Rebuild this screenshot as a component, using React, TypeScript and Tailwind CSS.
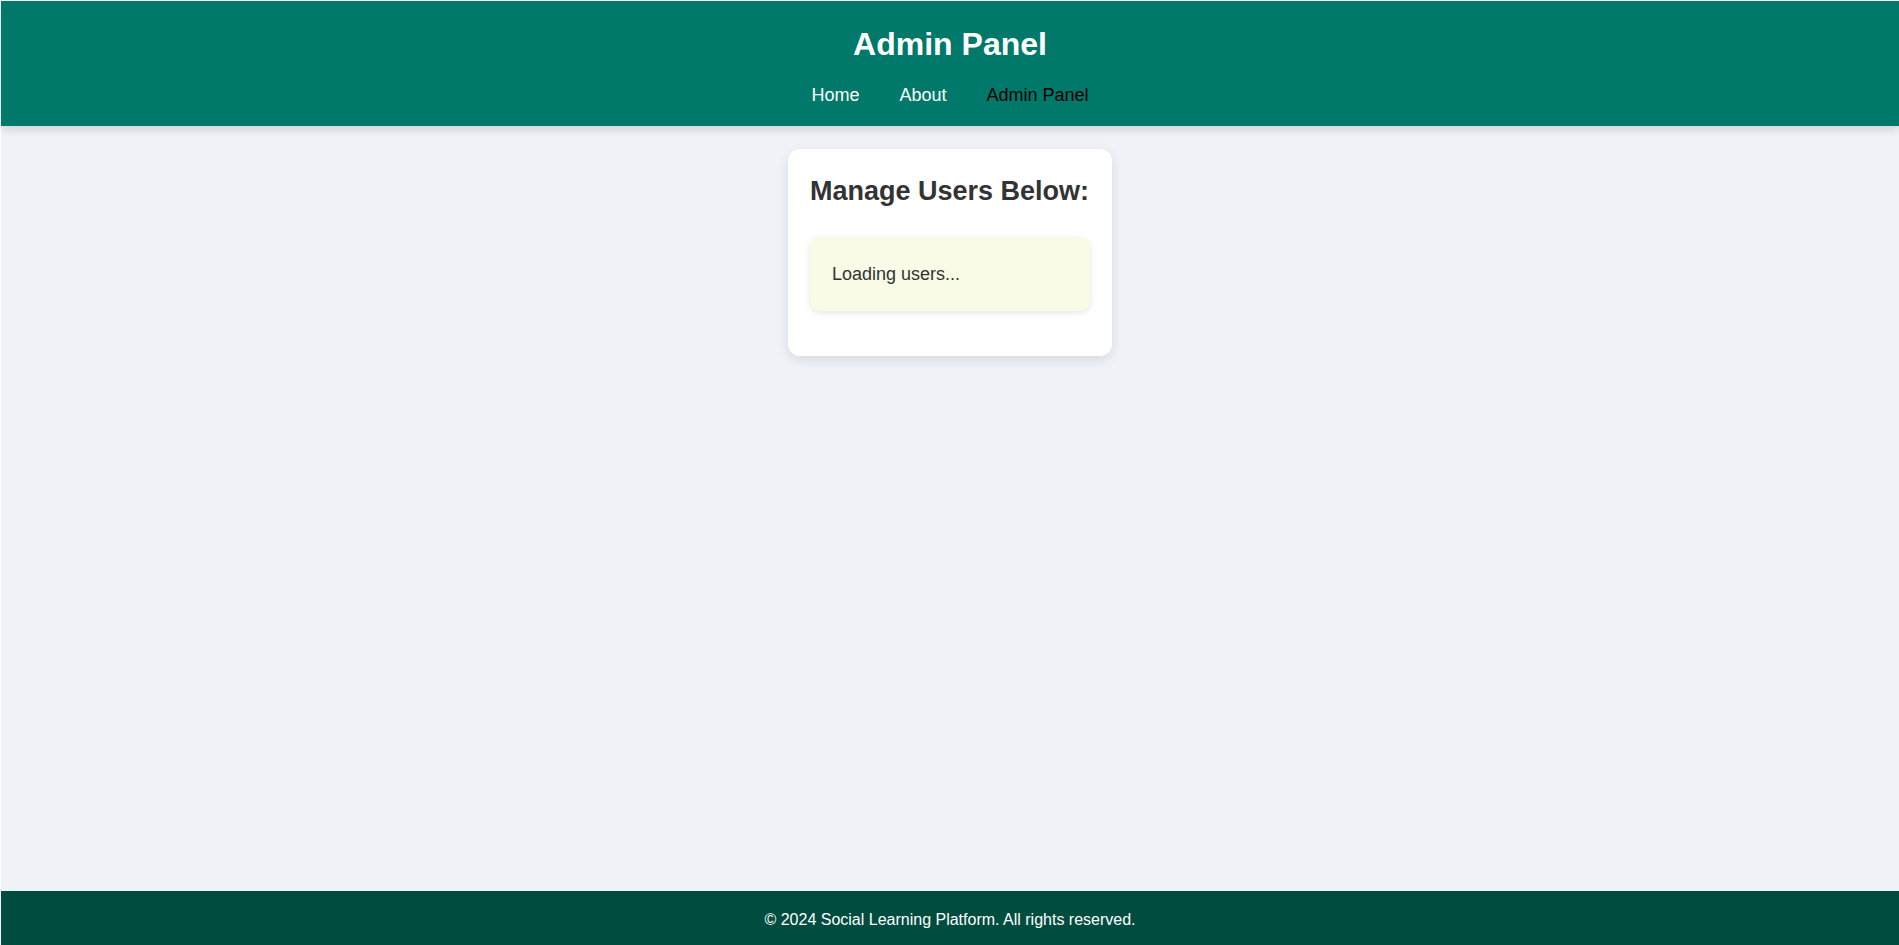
const navLinks = [
  { label: 'Home', active: false },
  { label: 'About', active: false },
  { label: 'Admin Panel', active: true },
];

export default function App() {
  return (
    <div className="flex h-screen flex-col overflow-hidden bg-white pl-px pt-px font-['Liberation_Sans',Arial,sans-serif]">
      <header className="relative z-10 flex shrink-0 flex-col items-center bg-[#00796b] pt-[25px] pb-[20px] shadow-[0_4px_8px_rgba(0,0,0,0.12)]">
        <h1 className="text-[32px] leading-[37px] font-bold text-white">Admin Panel</h1>
        <nav className="mt-[22px] flex">
          {navLinks.map((link) => (
            <a
              key={link.label}
              href="#"
              className={
                link.active
                  ? 'mx-5 text-[18px] leading-[21px] text-black'
                  : 'mx-5 text-[18px] leading-[21px] text-white'
              }
            >
              {link.label}
            </a>
          ))}
        </nav>
      </header>

      <main className="flex min-h-0 flex-1 flex-col items-center bg-[#eff2f7] pt-[23px]">
        <section className="w-[324px] rounded-[12px] bg-white px-[22px] pt-[27px] pb-[45px] shadow-[0_4px_12px_rgba(0,0,0,0.1)]">
          <h2 className="text-[27px] leading-[31px] font-bold whitespace-nowrap text-[#333]">
            Manage Users Below:
          </h2>
          <div className="mt-[30px] rounded-[10px] bg-[#f9fbe7] pt-[27px] pb-[26px] pl-[22px] shadow-[0_2px_6px_rgba(0,0,0,0.1)]">
            <p className="text-[18px] leading-[21px] text-[#333]">Loading users...</p>
          </div>
        </section>
      </main>

      <footer className="h-[54px] shrink-0 bg-[#004d40] pt-[20px] text-center text-[16px] leading-[18px] text-white">
        © 2024 Social Learning Platform. All rights reserved.
      </footer>
    </div>
  );
}
